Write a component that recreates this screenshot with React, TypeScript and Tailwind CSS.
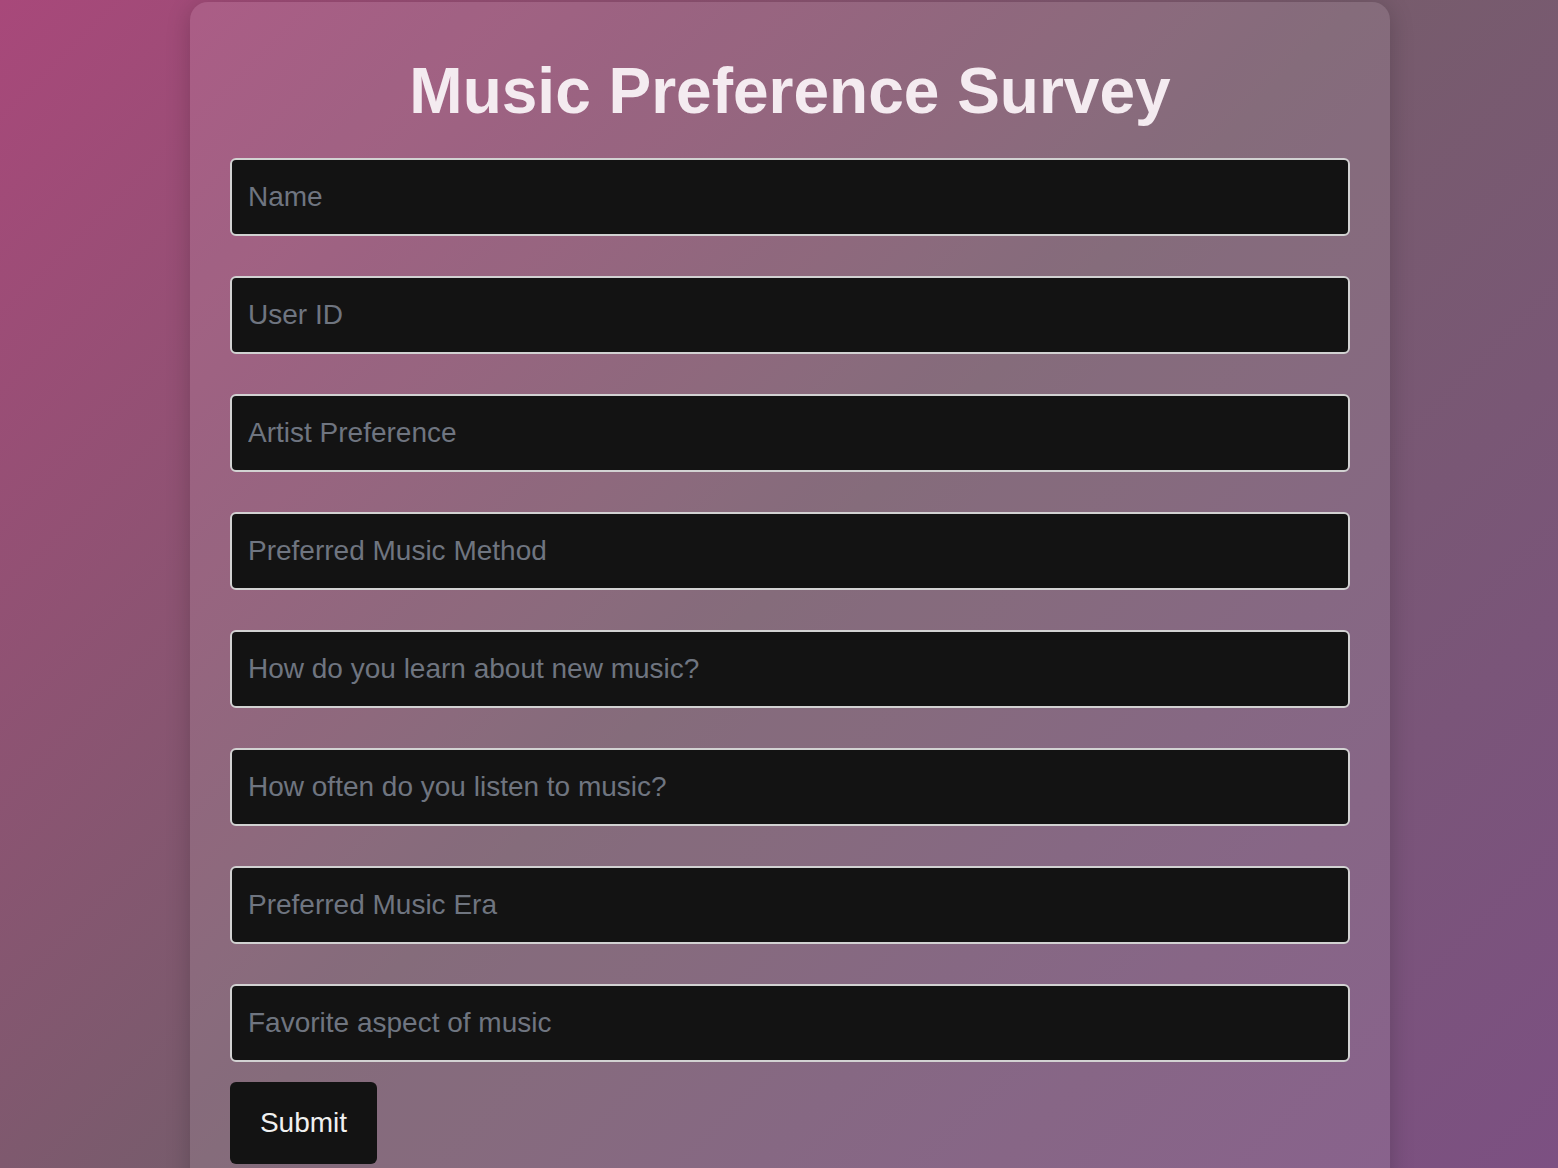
import React from "react";

const fields = [
  "Name",
  "User ID",
  "Artist Preference",
  "Preferred Music Method",
  "How do you learn about new music?",
  "How often do you listen to music?",
  "Preferred Music Era",
  "Favorite aspect of music",
];

export default function App() {
  return (
    <div
      className="w-full h-[1168px] overflow-hidden bg-[linear-gradient(135deg,#a8487a_0%,#775c6c_50%,#7c5082_100%)]"
      style={{ fontFamily: '"Liberation Sans", Arial, sans-serif' }}
    >
      <div className="ml-[190px] mt-[2px] w-[1200px] rounded-[18px] bg-white/10 shadow-[0_4px_24px_rgba(0,0,0,0.2)] px-[40px] pt-[52px] pb-[40px]">
        <h1 className="text-center text-[64px] font-bold leading-[74px] h-[74px] text-[#f4ebf0]">
          Music Preference Survey
        </h1>
        <form className="mt-[30px] flex flex-col" onSubmit={(e) => e.preventDefault()}>
          <div className="flex flex-col gap-[40px]">
            {fields.map((f) => (
              <input
                key={f}
                type="text"
                placeholder={f}
                className="h-[78px] w-full rounded-[6px] border-2 border-[#d2d2d2] bg-[#131313] px-[16px] text-[28px] text-white placeholder:text-[#6f7580] outline-none"
              />
            ))}
          </div>
          <div className="mt-[20px]">
            <button
              type="submit"
              className="h-[82px] w-[147px] rounded-[6px] bg-[#131313] text-[28px] text-[#f0f0f0]"
            >
              Submit
            </button>
          </div>
        </form>
      </div>
    </div>
  );
}
